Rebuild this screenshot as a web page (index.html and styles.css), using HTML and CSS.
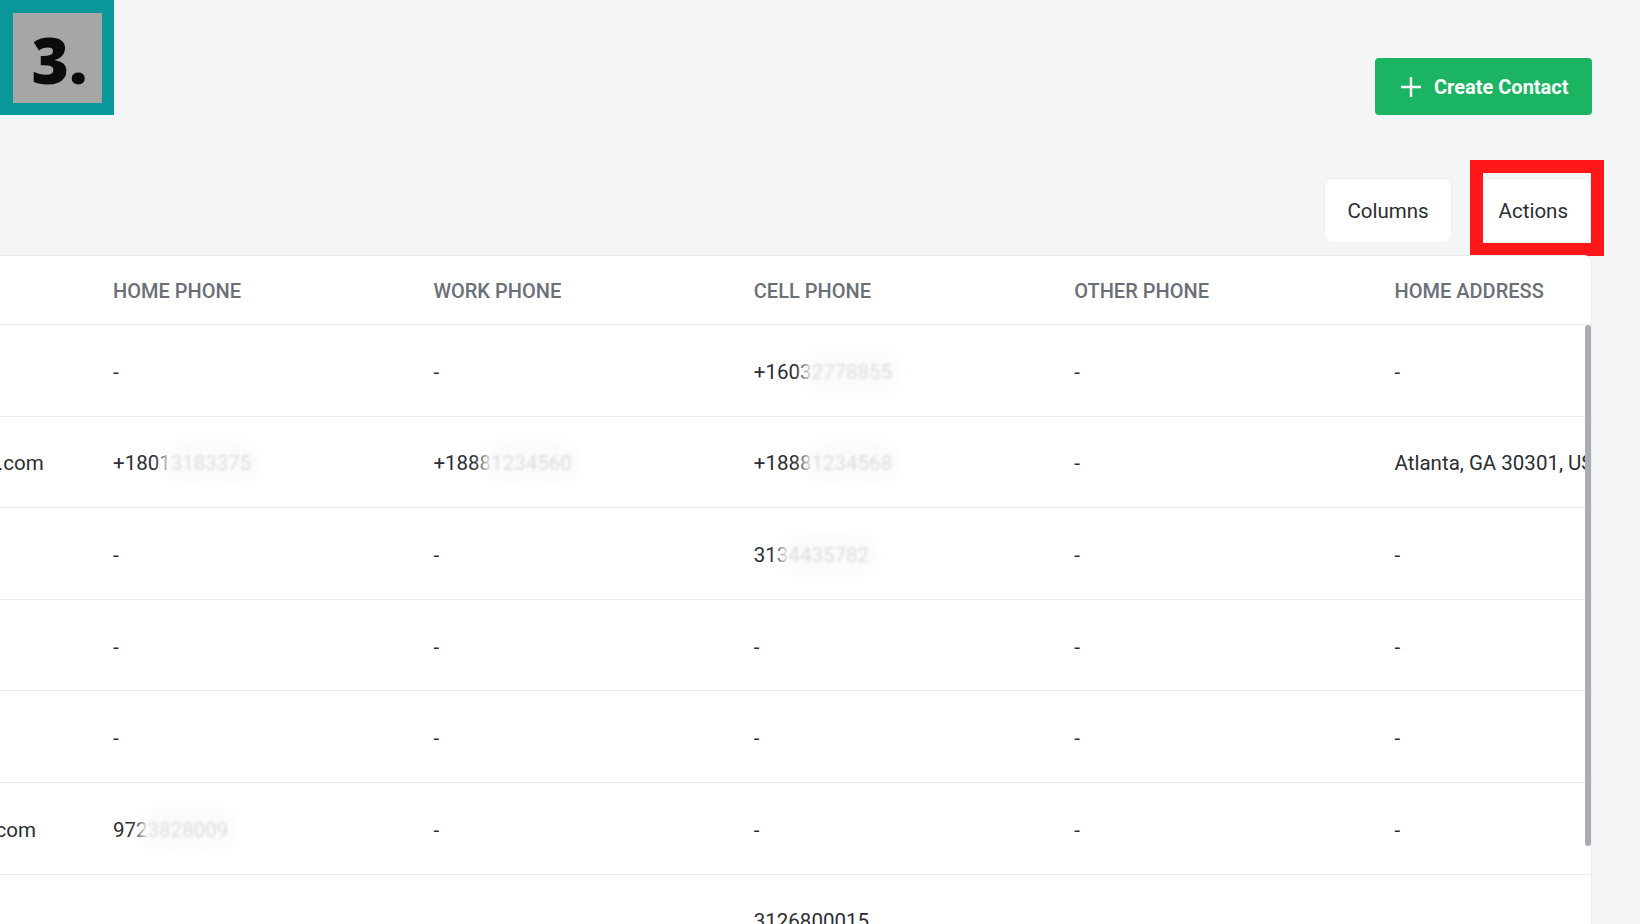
FILE: index.html
```html
<!DOCTYPE html>
<html lang="en">
<head>
<meta charset="utf-8">
<title>Contacts</title>
<link rel="stylesheet" href="styles.css">
</head>
<body>
<div class="step-badge"><div class="step-inner">3.</div></div>

<main class="page">
  <div class="topbar">
    <button class="btn-create">
      <svg class="plus" viewBox="0 0 22 22" width="22" height="22"><path d="M11 1v20M1 11h20" stroke="#fff" stroke-width="2.4" fill="none"/></svg>
      Create Contact
    </button>
  </div>

  <div class="toolbar">
    <button class="btn-light">Columns</button>
    <button class="btn-light btn-actions">Actions</button>
    <div class="highlight"></div>
  </div>

  <section class="card">
    <div class="table">
      <div class="row head">
        <div class="cell email">EMAIL</div>
        <div class="cell">HOME PHONE</div>
        <div class="cell">WORK PHONE</div>
        <div class="cell">CELL PHONE</div>
        <div class="cell">OTHER PHONE</div>
        <div class="cell">HOME ADDRESS</div>
      </div>
      <div class="row">
        <div class="cell email"></div>
        <div class="cell">-</div>
        <div class="cell">-</div>
        <div class="cell">+1603<span class="blur">2778855</span></div>
        <div class="cell">-</div>
        <div class="cell">-</div>
      </div>
      <div class="row">
        <div class="cell email">jennifer.williams@mail.com</div>
        <div class="cell">+1801<span class="blur">3183375</span></div>
        <div class="cell">+1888<span class="blur">1234560</span></div>
        <div class="cell">+1888<span class="blur">1234568</span></div>
        <div class="cell">-</div>
        <div class="cell">Atlanta, GA 30301, US</div>
      </div>
      <div class="row">
        <div class="cell email"></div>
        <div class="cell">-</div>
        <div class="cell">-</div>
        <div class="cell">313<span class="blur">4435782</span></div>
        <div class="cell">-</div>
        <div class="cell">-</div>
      </div>
      <div class="row">
        <div class="cell email"></div>
        <div class="cell">-</div>
        <div class="cell">-</div>
        <div class="cell">-</div>
        <div class="cell">-</div>
        <div class="cell">-</div>
      </div>
      <div class="row">
        <div class="cell email"></div>
        <div class="cell">-</div>
        <div class="cell">-</div>
        <div class="cell">-</div>
        <div class="cell">-</div>
        <div class="cell">-</div>
      </div>
      <div class="row">
        <div class="cell email short">info@brightdental.com</div>
        <div class="cell">972<span class="blur">3828009</span></div>
        <div class="cell">-</div>
        <div class="cell">-</div>
        <div class="cell">-</div>
        <div class="cell">-</div>
      </div>
      <div class="row">
        <div class="cell email"></div>
        <div class="cell"></div>
        <div class="cell"></div>
        <div class="cell">3126800015</div>
        <div class="cell"></div>
        <div class="cell"></div>
      </div>
    </div>
    <div class="scrollbar"></div>
  </section>
</main>
</body>
</html>
```

FILE: styles.css
```css
* { box-sizing: border-box; }

html, body {
  margin: 0;
  padding: 0;
  width: 1640px;
  height: 924px;
  overflow: hidden;
  background: #f4f5f7;
  font-family: Roboto, "Liberation Sans", Arial, sans-serif;
  color: #2b2d31;
}

.step-badge {
  position: absolute;
  left: 0;
  top: 0;
  width: 114px;
  height: 115px;
  background: #0a979b;
  padding: 13px 12px 12px 13px;
}

.step-inner {
  width: 100%;
  height: 100%;
  background: #a6a6a6;
  font-family: "Open Sans", "DejaVu Sans", sans-serif;
  font-weight: 800;
  font-size: 64px;
  line-height: 1;
  color: #0b0b0b;
  display: flex;
  align-items: center;
  justify-content: center;
  padding-top: 3px;
  padding-left: 4px;
}

.page {
  padding-right: 48px;
}

.topbar {
  display: flex;
  justify-content: flex-end;
  padding-top: 58px;
}

.btn-create {
  display: flex;
  align-items: center;
  gap: 12px;
  height: 57px;
  width: 217px;
  padding: 0 0 0 25px;
  border: none;
  border-radius: 4px;
  background: #1bb462;
  color: #fff;
  font-family: Roboto, "Liberation Sans", sans-serif;
  font-weight: 700;
  font-size: 20px;
}

.plus { flex: none; }

.toolbar {
  position: relative;
  display: flex;
  justify-content: flex-end;
  gap: 26px;
  margin-top: 64px;
  padding-right: 2px;
}

.btn-light {
  height: 63px;
  padding: 0 22px;
  border: none;
  border-radius: 8px;
  background: #fff;
  color: #2b2d31;
  font-family: Roboto, "Liberation Sans", sans-serif;
  font-size: 20.5px;
  box-shadow: 0 0 0 1px #eef0f2;
}

.highlight {
  position: absolute;
  left: 1470px;
  top: -19px;
  width: 134px;
  height: 96px;
  border: 13px solid #fe1719;
}

.card {
  position: relative;
  margin-top: 13px;
  height: 700px;
  background: #fff;
  border-top: 1px solid #e8eaed;
  border-right: 1px solid #eceef1;
  border-top-right-radius: 8px;
  overflow: hidden;
}

.table {
  margin-left: -223px;
}

.row {
  display: grid;
  grid-template-columns: 320px repeat(5, 320.4px);
  height: 91.6px;
  align-items: center;
  border-bottom: 1px solid #eaecef;
  font-size: 20.5px;
  padding-top: 3px;
}

.row.head {
  height: 69px;
  font-size: 20px;
  font-weight: 500;
  color: #6b6f78;
  padding-top: 1px;
}

.cell {
  padding-left: 16px;
  white-space: nowrap;
  overflow: visible;
}

.cell.email {
  text-align: right;
  padding-right: 55px;
  overflow: hidden;
}

.cell.email.short { padding-right: 61px; }

.row.head .cell.email { visibility: hidden; }

.blur {
  color: transparent;
  text-shadow: 0 0 3px rgba(0, 0, 0, 0.13);
  background: #fbfbfb;
  border-radius: 20px;
  box-shadow: 0 0 12px 9px #fbfbfb;
}

.scrollbar {
  position: absolute;
  right: 0;
  top: 69px;
  width: 6px;
  height: 521px;
  border-radius: 3px;
  background: #a9acb2;
}
```
